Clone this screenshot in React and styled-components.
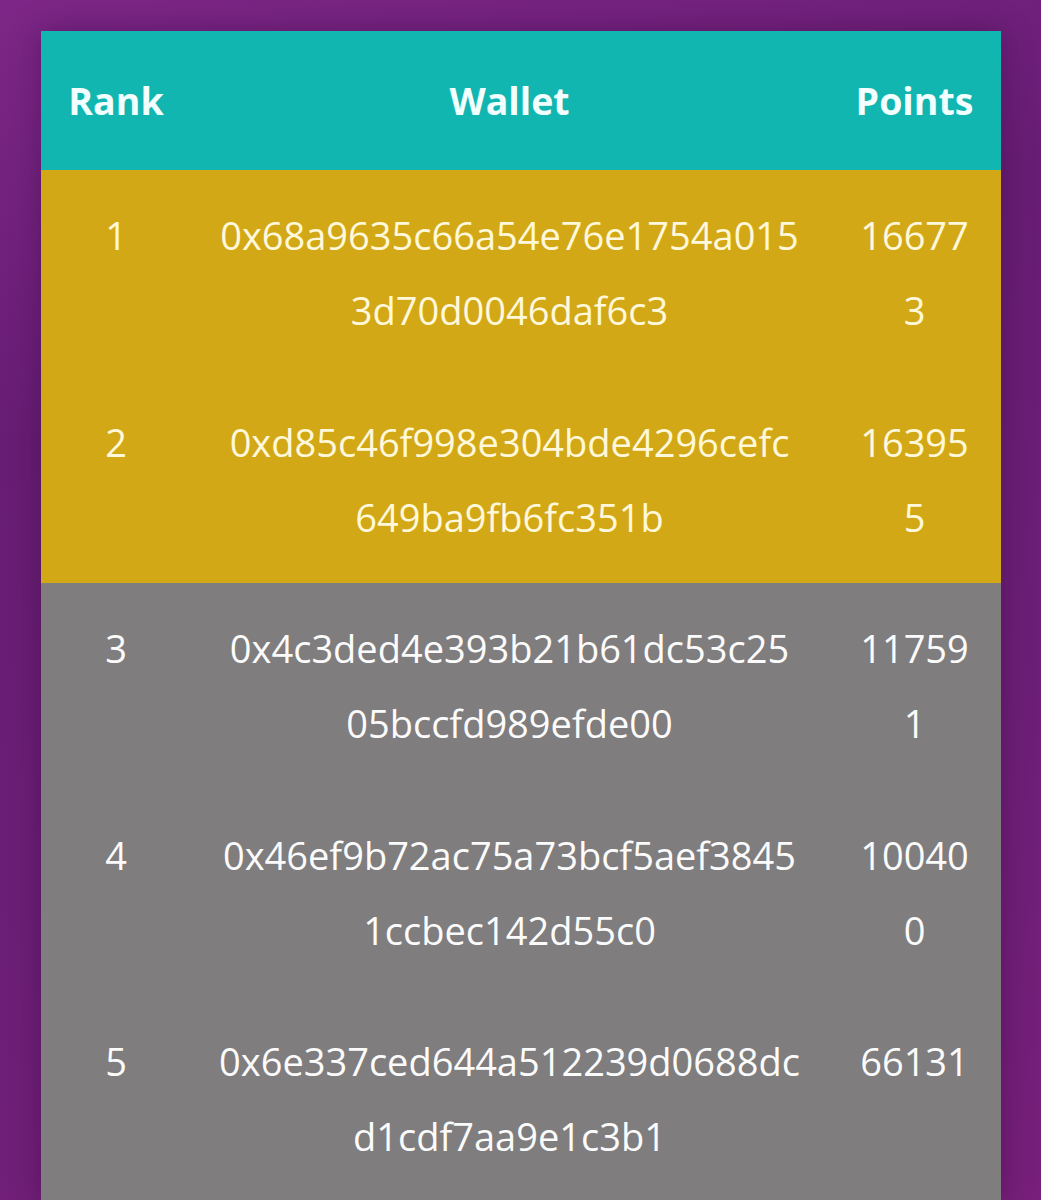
import React from 'react';
import styled, { createGlobalStyle } from 'styled-components';

const GlobalStyle = createGlobalStyle`
    html, body {
        margin: 0;
        padding: 0;
    }
    body {
        background: linear-gradient(165deg, #7d2687 0%, #671d73 30%, #6c1f76 65%, #771f7a 100%);
        min-height: 1200px;
        font-family: "Open Sans", "Noto Sans", sans-serif;
    }
`

const Page = styled.div`
    padding: 31px 40px 0 41px;
`

const Board = styled.div`
    width: 960px;
    box-shadow: 0 0 28px rgba(40, 0, 50, 0.35);
`

const Row = styled.div`
    display: grid;
    grid-template-columns: 150px 637px 173px;
    background: ${props => props.bg};
    color: ${props => props.fg};
`

const HeadRow = styled(Row)`
    height: 139px;
    align-items: center;
    font-size: 37.5px;
    font-weight: 700;
`

const BodyRow = styled(Row)`
    padding: 28px 0 28.5px;
    font-size: 38px;
    line-height: 75px;
`

const Cell = styled.div`
    text-align: center;
    white-space: nowrap;
    span{
        display: block;
    }
`

const rows = [
    { rank: 1, wallet: ['0x68a9635c66a54e76e1754a015', '3d70d0046daf6c3'], points: ['16677', '3'], top: true },
    { rank: 2, wallet: ['0xd85c46f998e304bde4296cefc', '649ba9fb6fc351b'], points: ['16395', '5'], top: true },
    { rank: 3, wallet: ['0x4c3ded4e393b21b61dc53c25', '05bccfd989efde00'], points: ['11759', '1'] },
    { rank: 4, wallet: ['0x46ef9b72ac75a73bcf5aef3845', '1ccbec142d55c0'], points: ['10040', '0'] },
    { rank: 5, wallet: ['0x6e337ced644a512239d0688dc', 'd1cdf7aa9e1c3b1'], points: ['66131'] },
];

function App(){
    return(
        <Page>
            <GlobalStyle />
            <Board>
                <HeadRow bg="#12b6b1" fg="#f2fffe">
                    <Cell>Rank</Cell>
                    <Cell>Wallet</Cell>
                    <Cell>Points</Cell>
                </HeadRow>
                {rows.map(r => (
                    <BodyRow key={r.rank} bg={r.top ? '#d3a816' : '#7f7d7e'} fg={r.top ? '#fff8da' : '#fbfbfb'}>
                        <Cell>{r.rank}</Cell>
                        <Cell>{r.wallet.map(l => <span key={l}>{l}</span>)}</Cell>
                        <Cell>{r.points.map((l, i) => <span key={i}>{l}</span>)}</Cell>
                    </BodyRow>
                ))}
            </Board>
        </Page>
    );
}

export default App;
